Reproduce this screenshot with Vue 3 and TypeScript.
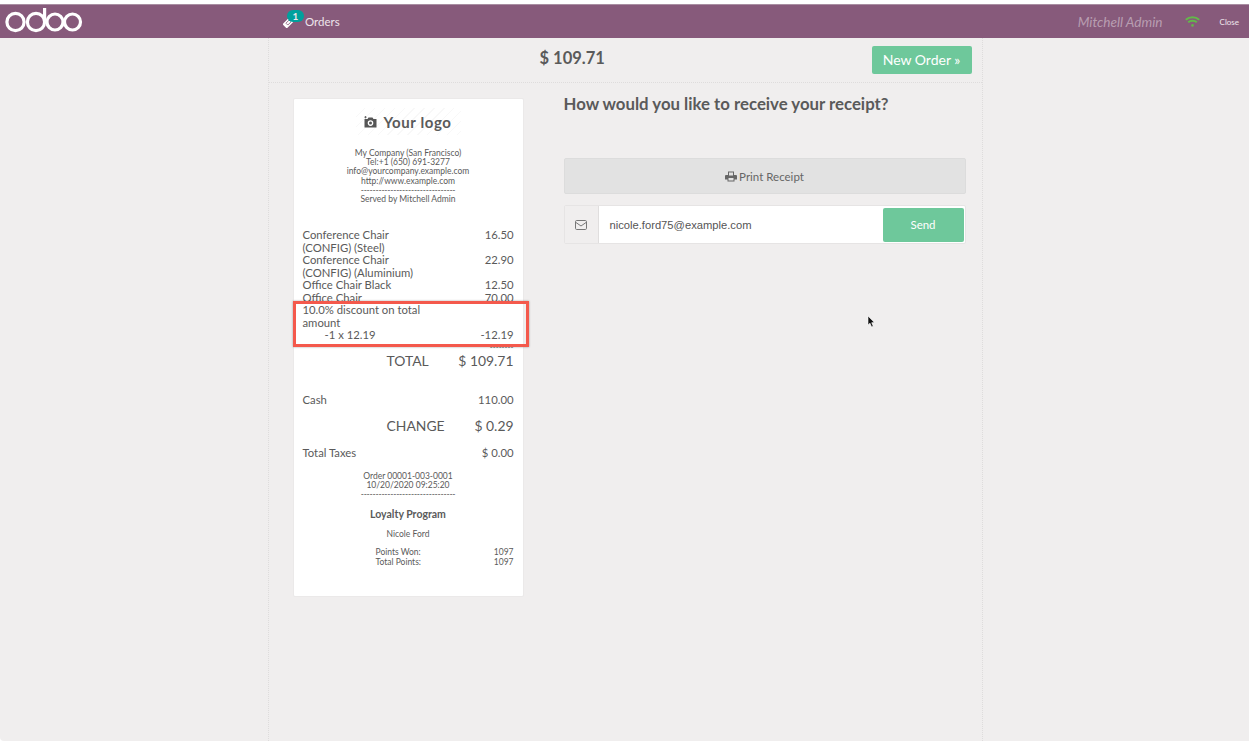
<script setup lang="ts">
// POS receipt screen: top bar, centered column, receipt paper and send options.
interface Line {
  name: string;
  price?: string;
}

const lines: Line[] = [
  { name: 'Conference Chair', price: '16.50' },
  { name: '(CONFIG) (Steel)' },
  { name: 'Conference Chair', price: '22.90' },
  { name: '(CONFIG) (Aluminium)' },
  { name: 'Office Chair Black', price: '12.50' },
  { name: 'Office Chair', price: '70.00' },
  { name: '10.0% discount on total' },
  { name: 'amount' },
];
</script>

<template>
  <div class="pos">
    <header class="topbar">
      <svg class="odoo-logo" width="78" height="26" viewBox="0 0 78 26" fill="none" stroke="#fff" stroke-width="3.2">
        <circle cx="10.5" cy="15" r="8.6" />
        <circle cx="31" cy="15" r="8.6" />
        <line x1="39.6" y1="1" x2="39.6" y2="15" />
        <circle cx="50" cy="15" r="8" />
        <circle cx="67.5" cy="15" r="8" />
      </svg>
      <div class="orders">
        <span class="ticket">
          <svg width="11" height="11" viewBox="0 0 11 11">
            <g transform="rotate(-45 5.5 5.5)">
              <rect x="0" y="2.5" width="11" height="6" rx="0.5" fill="#fff" />
              <rect x="3.2" y="4.2" width="4.6" height="2.6" fill="none" stroke="#875a7b" stroke-width="0.8" />
            </g>
          </svg>
          <span class="badge">1</span>
        </span>
        <span>Orders</span>
      </div>
      <div class="status">
        <span class="cashier">Mitchell Admin</span>
        <svg class="wifi" width="15" height="11" viewBox="0 0 15 11" fill="none" stroke="#63b84a" stroke-width="2">
          <path d="M0.8 3.7 C4.5 0.3 10.5 0.3 14.2 3.7" />
          <path d="M3.2 6.3 C5.5 4.2 9.5 4.2 11.8 6.3" />
          <circle cx="7.5" cy="9.4" r="1.3" fill="#63b84a" stroke="none" />
        </svg>
        <span class="close">Close</span>
      </div>
    </header>

    <main class="stage">
      <section class="column">
        <div class="top-content">
          <div class="total-due">$ 109.71</div>
          <button type="button" class="new-order">New Order <span class="chev">»</span></button>
        </div>

        <div class="content">
          <article class="receipt">
            <div class="logo-row">
              <svg width="13" height="12" viewBox="0 0 13 12">
                <path fill="#555" fill-rule="evenodd" d="M0.5 3 H3.5 L4.5 1.5 H8.5 L9.5 3 H12.5 V11.5 H0.5 Z M6.5 4.3 A2.8 2.8 0 1 0 6.5 9.9 A2.8 2.8 0 1 0 6.5 4.3 Z" />
                <circle cx="6.5" cy="7.1" r="1.5" fill="#555" />
                <path d="M1.5 0 V2.4 M0.3 1.2 H2.7" stroke="#555" stroke-width="0.8" />
              </svg>
              <span>Your logo</span>
            </div>

            <div class="company">
              <div>My Company (San Francisco)</div>
              <div>Tel:+1 (650) 691-3277</div>
              <div>info@yourcompany.example.com</div>
              <div>http://www.example.com</div>
              <div class="dashes">--------------------------------</div>
              <div>Served by Mitchell Admin</div>
            </div>

            <div class="orderlines">
              <div v-for="(line, i) in lines" :key="i" class="row">
                <span>{{ line.name }}</span>
                <span v-if="line.price">{{ line.price }}</span>
              </div>
              <div class="row">
                <span class="qty">-1 x 12.19</span>
                <span>-12.19</span>
              </div>
            </div>

            <div class="sum-dashes">--------</div>
            <div class="row big total-row">
              <span class="big-label">TOTAL</span>
              <span>$ 109.71</span>
            </div>

            <div class="row cash">
              <span>Cash</span>
              <span>110.00</span>
            </div>
            <div class="row big change-row">
              <span class="big-label">CHANGE</span>
              <span>$ 0.29</span>
            </div>
            <div class="row taxes">
              <span>Total Taxes</span>
              <span>$ 0.00</span>
            </div>

            <div class="company order-info">
              <div>Order 00001-003-0001</div>
              <div>10/20/2020 09:25:20</div>
              <div class="dashes">--------------------------------</div>
            </div>

            <div class="loyalty">
              <div class="loyalty-title">Loyalty Program</div>
              <div class="loyalty-name">Nicole Ford</div>
              <div class="points first">
                <span class="points-label">Points Won:</span>
                <span>1097</span>
              </div>
              <div class="points">
                <span class="points-label">Total Points:</span>
                <span>1097</span>
              </div>
            </div>

            <div class="highlight"></div>
          </article>

          <aside class="options">
            <h2>How would you like to receive your receipt?</h2>
            <button type="button" class="print">
              <svg width="12" height="11" viewBox="0 0 12 11">
                <path fill="#666" fill-rule="evenodd" d="M3 0.5 H9 V4 H11 Q12 4 12 5 V8.5 H9.5 V10.5 H2.5 V8.5 H0 V5 Q0 4 1 4 H3 Z M4 1.5 V4.5 H8 V1.5 Z M3.5 7 V9.5 H8.5 V7 Z" />
              </svg>
              Print Receipt
            </button>
            <div class="email-group">
              <span class="addon">
                <svg width="12" height="10" viewBox="0 0 12 10" fill="none" stroke="#777" stroke-width="1">
                  <rect x="0.5" y="0.5" width="11" height="9" rx="1.2" />
                  <path d="M0.8 2.4 L6 6 L11.2 2.4" />
                </svg>
              </span>
              <span class="email">nicole.ford75@example.com</span>
              <button type="button" class="send">Send</button>
            </div>
          </aside>
        </div>
      </section>
    </main>

    <svg class="cursor" width="9" height="13" viewBox="0 0 9 13">
      <path d="M1 1 V10 L3 8.2 L4.6 12 L6.2 11.2 L4.7 7.7 L7.4 7.5 Z" fill="#111" stroke="#fff" stroke-width="0.6" />
    </svg>
  </div>
</template>

<style scoped>
.pos {
  position: relative;
  display: flex;
  flex-direction: column;
  height: 741px;
  padding-top: 4px;
  box-sizing: border-box;
  font-family: Lato, "Open Sans", sans-serif;
  color: #5a5a5a;
}

.topbar {
  display: flex;
  align-items: center;
  height: 34px;
  flex: none;
  background: #875a7b;
  color: #fff;
  border-top: 1px solid #a98ea2;
  box-sizing: border-box;
}

.odoo-logo {
  margin-left: 5px;
  margin-top: -3px;
  flex: none;
}

.orders {
  display: flex;
  align-items: center;
  gap: 11px;
  margin-left: 200px;
  font-size: 11.5px;
  color: #eee5ec;
}

.ticket {
  position: relative;
  display: flex;
  width: 11px;
  height: 11px;
  margin-top: 2px;
}

.badge {
  position: absolute;
  left: 4px;
  top: -7px;
  width: 17px;
  height: 12px;
  border-radius: 6px;
  background: #00a09d;
  font-size: 10px;
  font-weight: 700;
  line-height: 12px;
  text-align: center;
}

.status {
  display: flex;
  align-items: center;
  margin-left: auto;
  padding-right: 10px;
}

.cashier {
  font-size: 13.6px;
  font-style: italic;
  color: rgba(255, 255, 255, 0.42);
}

.wifi {
  margin-left: 22px;
}

.close {
  margin-left: 20px;
  font-size: 8px;
  color: #efe7ed;
}

.stage {
  flex: 1;
  display: flex;
  justify-content: center;
  background: #f0eeee;
  padding-left: 1px;
  border-bottom-left-radius: 4px;
}

.column {
  width: 715px;
  box-sizing: border-box;
  border-left: 1px dotted #dedcdc;
  border-right: 1px dotted #dedcdc;
}

.top-content {
  display: flex;
  align-items: center;
  height: 45px;
  box-sizing: border-box;
  border-bottom: 1px dotted #dedcdc;
  padding-left: 271px;
  padding-right: 10px;
}

.total-due {
  font-size: 16.5px;
  font-weight: 700;
  margin-top: -4px;
}

.new-order {
  margin-left: auto;
  width: 100px;
  height: 28px;
  border: 0;
  border-radius: 2px;
  background: #6ec89b;
  color: #fff;
  font-family: inherit;
  font-size: 14px;
  padding: 0 0 1px;
}

.chev {
  font-size: 14px;
}

.content {
  display: flex;
  padding: 15px 0 0 24px;
}

.receipt {
  position: relative;
  width: 231px;
  height: 499px;
  box-sizing: border-box;
  padding: 0 9px;
  background: #fff;
  border: 1px solid #ebe9e9;
  border-radius: 2px;
  flex: none;
}

.logo-row {
  display: flex;
  align-items: center;
  justify-content: center;
  gap: 6px;
  width: 105px;
  height: 27px;
  margin: 9px auto 0;
  font-size: 15px;
  font-weight: 700;
  letter-spacing: 0.6px;
  white-space: nowrap;
  background: repeating-linear-gradient(135deg, #fff 0 6px, #f8f8f8 6px 7px);
}

.company {
  margin-top: 14px;
  font-size: 8.5px;
  line-height: 9.2px;
  text-align: center;
}

.dashes {
  height: 9.2px;
  letter-spacing: -0.2px;
}

.orderlines {
  margin-top: 25px;
}

.row {
  display: flex;
  justify-content: space-between;
  font-size: 11.3px;
  line-height: 12.5px;
}

.qty {
  padding-left: 22px;
}

.sum-dashes {
  height: 6px;
  margin-top: 2px;
  text-align: right;
  font-size: 8px;
  line-height: 6px;
}

.big {
  font-size: 13.9px;
  line-height: 20px;
}

.total-row {
  margin-top: 1px;
  justify-content: flex-start;
}

.change-row {
  margin-top: 10px;
  justify-content: flex-start;
}

.big-label {
  margin-left: 84px;
  margin-right: auto;
}

.cash {
  margin-top: 23px;
}

.taxes {
  margin-top: 11px;
}

.order-info {
  margin-top: 12px;
}

.loyalty {
  margin-top: 9px;
  text-align: center;
  font-size: 8.5px;
  line-height: 9.2px;
}

.loyalty-title {
  font-size: 10.5px;
  font-weight: 700;
  line-height: 13px;
}

.loyalty-name {
  margin-top: 8px;
  line-height: 10px;
}

.points {
  display: flex;
  justify-content: space-between;
}

.points.first {
  margin-top: 9px;
}

.points-label {
  margin-left: 73px;
}

/* annotation box drawn over the receipt in the original screenshot */
.highlight {
  position: absolute;
  left: -1px;
  top: 202px;
  width: 236px;
  height: 46px;
  box-sizing: border-box;
  border: 3px solid #f4594c;
  box-shadow: 0 0 2px rgba(0, 0, 0, 0.35);
}

.options {
  width: 402px;
  margin-left: 40px;
}

.options h2 {
  margin: -4px 0 0;
  font-size: 16.8px;
  font-weight: 700;
  line-height: 20px;
}

.print {
  display: flex;
  align-items: center;
  justify-content: center;
  gap: 2px;
  width: 100%;
  height: 36px;
  margin-top: 44px;
  border: 1px solid #dcdcdc;
  border-radius: 2px;
  background: #e2e2e2;
  color: #666;
  font-family: inherit;
  font-size: 11.5px;
  padding: 0;
}

.email-group {
  display: flex;
  align-items: center;
  height: 39px;
  margin-top: 11px;
  box-sizing: border-box;
  background: #fff;
  border: 1px solid #e6e4e4;
  border-radius: 2px;
}

.addon {
  display: flex;
  align-items: center;
  justify-content: center;
  width: 33px;
  height: 100%;
  flex: none;
  background: #f0eeee;
  border-right: 1px solid #e0dede;
}

.email {
  margin-left: 11px;
  font-family: "Liberation Sans", Arial, sans-serif;
  font-size: 11.2px;
  color: #555;
}

.send {
  margin-left: auto;
  margin-right: 1px;
  width: 81px;
  height: 34px;
  border: 0;
  border-radius: 2px;
  background: #6ec89b;
  color: #fff;
  font-family: inherit;
  font-size: 11.5px;
  padding: 0;
}

.cursor {
  position: absolute;
  left: 867px;
  top: 315px;
}
</style>

<style>
html,
body {
  background: #fff;
}
</style>
